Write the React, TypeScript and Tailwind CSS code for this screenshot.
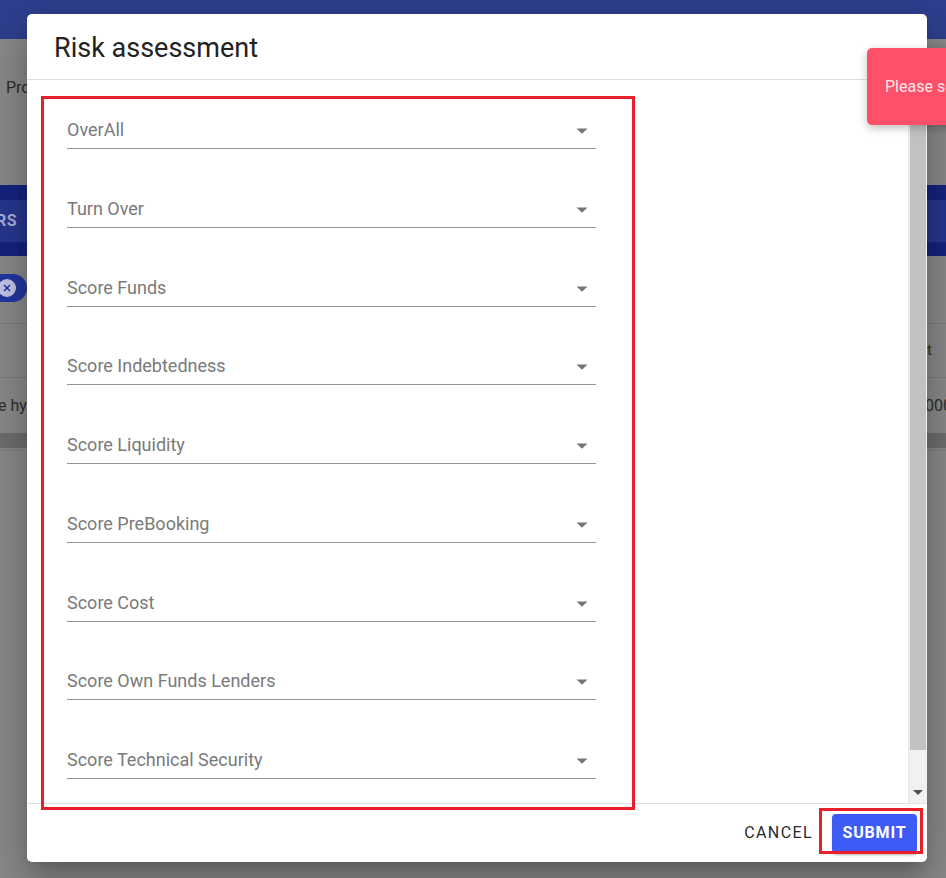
import React from "react";

const fields = [
  "OverAll",
  "Turn Over",
  "Score Funds",
  "Score Indebtedness",
  "Score Liquidity",
  "Score PreBooking",
  "Score Cost",
  "Score Own Funds Lenders",
  "Score Technical Security",
];

function Caret() {
  return (
    <svg width="12" height="6" viewBox="0 0 12 6" className="shrink-0">
      <path d="M0.5 0.5 L11.5 0.5 L6 5.8 Z" fill="#757575" />
    </svg>
  );
}

export default function App() {
  return (
    <div
      className="relative w-[946px] h-[878px] overflow-hidden bg-[#8a8a8a]"
      style={{ fontFamily: "Roboto, 'Liberation Sans', sans-serif" }}
    >
      {/* background page (dimmed) */}
      <div className="flex flex-col">
        <div className="h-[39px] bg-[#2e3f8f]" />
        <div className="h-[146px] pt-[37px] pl-[6px] text-[16px] text-[#2e2e2e]">Pro</div>
        <div className="h-[71px] bg-[#15237f] flex items-center">
          <div className="h-[42px] w-full bg-[#27378f] flex items-center text-[16px] font-bold text-[#a7b0da] tracking-wide">
            <span className="-ml-[4px]">RS</span>
          </div>
        </div>
        <div className="h-[67px] flex items-center">
          <div className="h-[28px] w-[27px] rounded-r-full bg-[#2337a0] flex items-center justify-start -mt-[4px]">
            <div className="w-[18px] h-[18px] -ml-[2px] rounded-full bg-[#c3c8e6] flex items-center justify-center">
              <svg width="10" height="10" viewBox="0 0 10 10">
                <path d="M2 2 L8 8 M8 2 L2 8" stroke="#2337a0" strokeWidth="1.6" />
              </svg>
            </div>
          </div>
        </div>
        <div className="h-[54px] border-t border-[#7a7a7a] flex items-center justify-end pr-[14px] text-[15px] text-[#2e2e2e]">
          t
        </div>
        <div className="h-[56px] border-t border-[#7a7a7a] flex items-center justify-between text-[16px] text-[#2e2e2e]">
          <span className="-ml-[2px]">e hyp</span>
          <span className="-mr-[6px]">000</span>
        </div>
        <div className="h-[15px] bg-[#6e6e6e]" />
        <div className="h-[3px] border-b border-[#7e7e7e]" />
      </div>

      {/* dialog */}
      <div className="absolute left-[27px] top-[14px] w-[900px] h-[848px] bg-white rounded-[5px] shadow-[0_11px_15px_-7px_rgba(0,0,0,0.2),0_24px_38px_3px_rgba(0,0,0,0.14),0_9px_46px_8px_rgba(0,0,0,0.12)] flex flex-col overflow-hidden">
        <div className="h-[66px] border-b border-[#e0e0e0] pl-[27px] pt-[17px] text-[27px] leading-[34px] text-[#222] font-normal">
          Risk assessment
        </div>
        <div className="flex-1 flex min-h-0">
          <div className="flex-1 flex flex-col pl-[40px] pt-[34px] gap-[43.75px]">
            {fields.map((f) => (
              <div
                key={f}
                className="w-[529px] h-[35px] border-b border-[#949494] flex items-center justify-between pr-[8px]"
              >
                <span className="text-[18px] text-[#7a7a7a] -mt-[3px]">{f}</span>
                <Caret />
              </div>
            ))}
          </div>
          <div className="w-[19px] bg-[#f1f1f1] border-l border-[#e6e6e6] flex flex-col">
            <div className="h-[17px]" />
            <div className="h-[653px] bg-[#c1c1c1] mx-[1px]" />
            <div className="flex-1 flex items-end justify-center pb-[7px]">
              <svg width="10" height="6" viewBox="0 0 10 6">
                <path d="M0 0 L10 0 L5 5 Z" fill="#505050" />
              </svg>
            </div>
          </div>
        </div>
        <div className="h-[59px] border-t border-[#e0e0e0] flex items-center justify-end pr-[10px] gap-[19px]">
          <span className="text-[16px] font-normal tracking-[1.4px] text-[#2a2a2a]">CANCEL</span>
          <div className="w-[85px] h-[39px] rounded-[4px] bg-[#3f5bf6] shadow-[0_3px_3px_-1px_rgba(0,0,0,0.3)] flex items-center justify-center text-[16px] font-bold tracking-[0.8px] text-white">
            SUBMIT
          </div>
        </div>
      </div>

      {/* annotation boxes */}
      <div className="absolute left-[41px] top-[96px] w-[594px] h-[714px] border-[3px] border-[#e8202a]" />
      <div className="absolute left-[819px] top-[808px] w-[104px] h-[46px] border-[3px] border-[#e8202a]" />

      {/* toast */}
      <div className="absolute left-[867px] top-[48px] w-[300px] h-[77px] rounded-[5px] bg-[#fe5169] shadow-[0_3px_8px_rgba(0,0,0,0.25)] flex items-center pl-[18px] text-[16px] text-[#fde6ea] whitespace-nowrap">
        Please select all fields
      </div>
    </div>
  );
}
